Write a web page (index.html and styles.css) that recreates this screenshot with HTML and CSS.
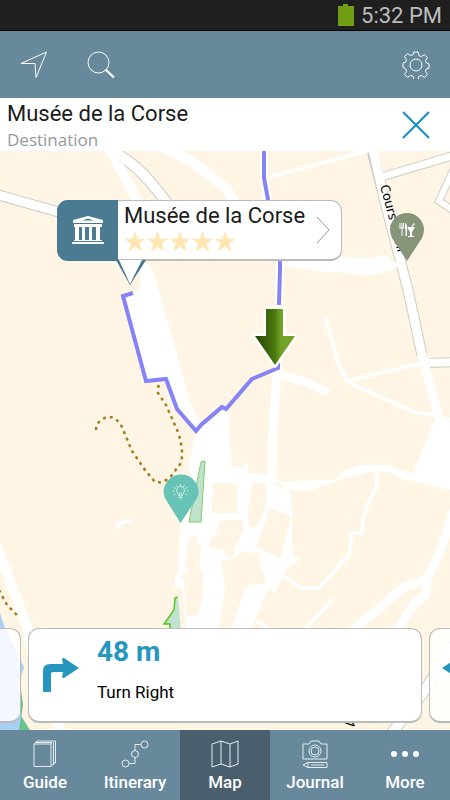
FILE: index.html
```html
<!DOCTYPE html>
<html lang="en">
  <head>
    <meta charset="UTF-8" />
    <meta name="viewport" content="width=device-width,initial-scale=1.0" />
    <title>Map - Musée de la Corse</title>
    <link rel="stylesheet" href="styles.css">
  </head>
  <body>
    <div class="status-bar">
      <svg class="battery" width="16" height="22" viewBox="0 0 16 22"><path d="M0 2h5V0h5v2h6v20H0z" fill="#709f16"/></svg>
      <span>5:32 PM</span>
    </div>

    <header class="toolbar">
      <button type="button" class="icon-button" aria-label="My location">
        <svg width="28" height="28" viewBox="0 0 28 28"><path d="M1 12.500L26.500 1 16 26.500 15 12.500z"/></svg>
      </button>
      <button type="button" class="icon-button" aria-label="Search">
        <svg width="28" height="28" viewBox="0 0 28 28"><circle cx="11.500" cy="11.500" r="10.500"/><path d="M18.500 18.500l8.500 8" stroke-width="2.200"/></svg>
      </button>
      <button type="button" class="icon-button settings" aria-label="Settings">
        <svg width="28" height="28" viewBox="0 0 28 28">
          <path d="M11.800 1h4.400l.7 3.600 2.500 1 3-2 3.100 3.100-2 3 1 2.500 2.500.6v4.400l-2.500.6-1 2.500 2 3-3.100 3.100-3-2-2.500 1-.7 3.100h-4.400l-.7-3.100-2.500-1-3 2-3.100-3.100 2-3-1-2.500L1 16.200v-4.400l2.500-.6 1-2.500-2-3 3.100-3.100 3 2 2.500-1z" stroke-linejoin="round"/>
          <circle cx="14" cy="14" r="6"/>
        </svg>
      </button>
    </header>

    <section class="destination">
      <div>
        <h1>Musée de la Corse</h1>
        <p>Destination</p>
      </div>
      <button type="button" class="icon-button close" aria-label="Close">
        <svg width="28" height="28" viewBox="0 0 28 28"><path d="M1 1l26 26M27 1L1 27"/></svg>
      </button>
    </section>

    <main class="map">
      <svg class="map-canvas" viewBox="0 151 450 579" preserveAspectRatio="xMidYMid slice">
        <rect y="151" width="450" height="579" fill="#fef5e4"/>

        <!-- river and river bank -->
        <path d="M0 613l5 15 19 39-3 10v38l8 15H0z" fill="#a9d0f5"/>
        <path d="M21 716l9 14H19zM21 690l2 15-2 15z" fill="#69c48b"/>

        <!-- roads with an outline -->
        <g class="road-edge">
          <path d="M-5 194L62 213" stroke-width="11"/>
          <path d="M112 151q18 10 30 22t34 42" stroke-width="12"/>
          <path d="M372 151l12 47 24 92 14 65" stroke-width="11"/>
          <path d="M382 177L455 155" stroke-width="9"/>
          <path d="M456 164l-17 37 15 10" stroke-width="8"/>
          <path d="M430 363l25-1" stroke-width="10"/>
          <path d="M388 738l37-48 31-48" stroke-width="12"/>
        </g>
        <g class="road">
          <path d="M-5 194L62 213" stroke-width="9"/>
          <path d="M112 151q18 10 30 22t34 42" stroke-width="10"/>
          <path d="M372 145l12 53 24 92 14 65 20 75" stroke-width="9"/>
          <path d="M378 178L455 155" stroke-width="7"/>
          <path d="M456 164l-17 37 15 10" stroke-width="6"/>
          <path d="M422 363l33-1" stroke-width="8"/>
          <path d="M388 738l37-48 31-48" stroke-width="10"/>
        </g>

        <!-- lanes -->
        <g class="road">
          <path d="M107 145l25 45 15 40" stroke-width="10"/>
          <path d="M158 145l35 17 34 27 25 45" stroke-width="10"/>
          <path d="M269 177l99-26" stroke-width="4"/>
          <path d="M278 366l-3 34-3 40v42" stroke-width="9"/>
          <path d="M278 374l27 8 20 9" stroke-width="9" stroke-linecap="round"/>
          <path d="M326 319l12 44 9 18 67-16h14M347 382l67 30 26 4" stroke-width="4" stroke-linecap="round"/>
          <path d="M376 470l1 16-10 19-4 15-1 13h-11l-1 20-5 6-26 29h-17l-18-11" stroke-width="4"/>
          <path d="M454 510l-14 42-13 27-25 9-22 20-30 24" stroke-width="9"/>
          <path d="M427 578l-1 17-11 8-21 31" stroke-width="9"/>
          <path d="M332 600l-30 32M258 622l20 12" stroke-width="4" stroke-linecap="round"/>
          <path d="M-4 545l16 42 14 36 12 55 26 60" stroke-width="10"/>
          <path d="M119 529l-1-5 13-4" stroke-width="4"/>
        </g>

        <!-- squares and open ground -->
        <g fill="#fff">
          <path d="M140 260l10 5 5 11 8 29 13 45 14 52 10 20-4 10-19-23-12-30-19 1-20-84 14-7z"/>
          <path d="M285 263l15-6 78 1v-3l11 1 2 6h8v4l-8 4-17 5-28-1-1-3-10 2-50-6z"/>
          <path d="M434 421l16-4v73l-37-9-11-2-13-7-13-1-31 7-36 13-7-1-8 1-7-5v-5l46-1 12-9 15-6h28l25 9 5-13z"/>
          <path d="M196 432l29-24 4 4 1 28 2 27h11v-4h5v10l24 1 6 7 16 2-4 7 2 18v31l1 18 9 1-14 10-5 9-9 17-5-6-7 16-10 24H186l-4-40-9-2 2-8 3-4 2-50 9-12 5-25-6-21z"/>
        </g>

        <!-- blocks of houses -->
        <g fill="#fef5e4">
          <path d="M213 483h24v30h-25z"/>
          <path d="M252 483h14v20l-3 12-7 12h-7l-1-14z"/>
          <path d="M220 520h23v11l-7 15-3 11h-8v-7l-15-2v-9l6-5z"/>
          <path d="M270 508l21 8-10 42-25-11z"/>
          <path d="M222 561l12-3 8-6 18 1v15l5 9-1 7-10-1-9 5-14 41h-12l2-12 4-27z"/>
          <path d="M189 537l8-1v9h5l-3 19 4 12-1 24-5 16-11 1-2-39-5-2 10-4v-5h-4z"/>
          <path d="M161 524h18l-4 58-2 3 3 10-12 15zM276 481l14 10-14-6z"/>
        </g>

        <!-- gardens -->
        <path d="M201 462l4-1-4 61h-12z" fill="#bfe3cf" stroke="#7fcb62"/>
        <path d="M181 631l-3-34-3 1-1 12-10 14h6v7z" fill="#bfe3cf"/>
        <path d="M178 597l-3 1-1 12-10 14h6v7" fill="none" stroke="#5cc51f" stroke-width="1.500"/>

        <!-- footpaths -->
        <path class="footpath" d="M96 430q0-9 11-13 9-1 15 10l10 24 13 19 10 12q9 2 17-7l9-12q3-13-3-31l-12-27-8-12 1-14"/>
        <path class="footpath" d="M-1 590l8 15 12 12"/>

        <!-- route -->
        <g fill="none" stroke-linejoin="miter">
          <path d="M264 145v33l5 27 11 55v10l-1 36" stroke="#fff" stroke-width="8"/>
          <path d="M264 145v33l5 27 11 55v10l-1 35M278 361v7l-26 11-26 30-4-2-21 18-5 6-19-22-11-30-20 2-23-85 10-3" stroke="#8583f6" stroke-width="4"/>
        </g>

        <defs>
          <linearGradient id="arrow">
            <stop offset="0" stop-color="#244600"/>
            <stop offset=".5" stop-color="#4c7910"/>
            <stop offset=".65" stop-color="#72a326"/>
            <stop offset="1" stop-color="#72a326"/>
          </linearGradient>
        </defs>
        <path d="M266 309h17v27h12l-20 29-20-29h11z" fill="url(#arrow)" stroke="#fff" stroke-width="5" stroke-linejoin="round" paint-order="stroke"/>

        <text class="street" transform="translate(380 186) rotate(75)">Cours Paoli</text>
        <text class="street" transform="translate(352 729) rotate(-52)">Ve</text>

        <!-- restaurant pin -->
        <g transform="translate(407 261)">
          <path d="M0 0L-15-23Q-17-28-17-31A17 17 0 0 1 17-31Q17-28 15-23z" fill="#86947a"/>
          <path d="M-7-38v5M-5-38v5M-3.500-38v5M-7.500-33h4.500M-5-33v8" stroke="#fff" fill="none"/>
          <path d="M-2-38q2 0 2 5v8h-1.500v-7H-2zM0-34h8l-3 5v4h2v1H1v-1h2v-4zM4-34l3-4 1 1-3 3z" fill="#fff"/>
        </g>

        <!-- sight pin -->
        <g transform="translate(180.500 523)">
          <path d="M0 0L-15-24Q-17-28-17-31A17 17 0 0 1 18-31Q18-28 16-24z" fill="#66c3b5"/>
          <g fill="none" stroke="#dff5ef" stroke-width=".8">
            <path d="M-2-27q0-2-1-3a4 4 0 1 1 6 0q-1 1-1 3zM-2-25.500h4M-1-24h2M-1-27v-3h2v3"/>
            <path d="M0-39v3M-4-38l1 2M4-38l-1 2M-7-36l2 2M7-36l-2 2M-8-32h2M8-32H6M-7-28l2-1M7-28l-2-1"/>
          </g>
        </g>
      </svg>

      <a href="#" class="callout">
        <span class="callout-icon">
          <svg width="32" height="30" viewBox="0 0 32 30" fill="#fff">
            <path fill-rule="evenodd" d="M1 4l15-4 15 4v3H1zM10 4.500h12L16 2.500z"/>
            <path d="M2 8h28v3H2zM3 11h4v13H3zM10 11h3v13h-3zM17 11h3v13h-3zM24 11h4v13h-4zM2 24h28v1H2zM0 26h32v2H0z"/>
          </svg>
        </span>
        <span class="callout-text">
          <span class="callout-title">Musée de la Corse</span>
          <svg class="stars" width="113" height="21" viewBox="0 0 113 21" role="img" aria-label="5 stars">
            <defs><path id="star" d="M11 0l2.600 7.700h8.200l-6.600 4.900 2.500 7.900L11 15.700l-6.700 4.800 2.500-7.900L.2 7.700h8.200z"/></defs>
            <use href="#star"/><use href="#star" x="22.500"/><use href="#star" x="45"/><use href="#star" x="67.500"/><use href="#star" x="90"/>
          </svg>
        </span>
        <svg class="chevron" width="14" height="28" viewBox="0 0 14 28"><path d="M1 1l12 13L1 27"/></svg>
        <svg class="callout-tail" width="32" height="26" viewBox="0 0 32 26"><path d="M1 0h30L15 25z" fill="#457891"/><path d="M4 0h23L15 24z" fill="#fff"/></svg>
      </a>

      <div class="steps">
        <article class="step side"></article>
        <article class="step">
          <svg class="turn" width="36" height="34" viewBox="0 0 36 34"><path d="M0 34V13q0-7 7-7h13l-1-5q0-1 2-1l15 10-15 10q-2 0-2-1l1-5H10q-2 0-2 2v18z"/></svg>
          <div class="step-text">
            <h2>48 m</h2>
            <p>Turn Right</p>
          </div>
        </article>
        <article class="step side">
          <svg class="turn" width="36" height="34" viewBox="0 0 36 34"><path d="M36 34V13q0-7-7-7H16l1-5q0-1-2-1L0 10l15 10q2 0 2-1l-1-5h10q2 0 2 2v18z"/></svg>
        </article>
      </div>
    </main>

    <nav class="tab-bar">
      <a href="#">
        <svg width="28" height="28" viewBox="0 0 28 28"><path d="M3 4h17v22.500H3zM3 4l3-3h18.500v22H23M20 4l1-1.500H5M22.500 2.500V25H20"/></svg>
        <span>Guide</span>
      </a>
      <a href="#">
        <svg width="28" height="28" viewBox="0 0 28 28"><circle cx="4.500" cy="23.500" r="3.500"/><circle cx="14" cy="14" r="3.500"/><circle cx="23.500" cy="4.500" r="3.500"/><path d="M8 23.500h6v-6M14 10.500v-6h6"/></svg>
        <span>Itinerary</span>
      </a>
      <a href="#" class="active">
        <svg width="28" height="28" viewBox="0 0 28 28"><path d="M1 4l9-3 9 3 8-3v23l-8 3-9-3-9 3zM10 1v23M19 4v23"/></svg>
        <span>Map</span>
      </a>
      <a href="#">
        <svg width="28" height="28" viewBox="0 0 28 28"><path d="M2 4h6l2-3h8l2 3h6v15H2z"/><circle cx="14" cy="11" r="6"/><circle cx="14" cy="11" r="4"/><path d="M2 25l5-2.500h19v5H7zM7 22.500v5M10 25h13"/></svg>
        <span>Journal</span>
      </a>
      <a href="#">
        <svg width="28" height="28" viewBox="0 0 28 28"><g fill="#fff" stroke="none"><circle cx="3" cy="14" r="3"/><circle cx="14" cy="14" r="3"/><circle cx="25" cy="14" r="3"/></g></svg>
        <span>More</span>
      </a>
    </nav>
  </body>
</html>
```
FILE: styles.css
```css
* {
  margin: 0;
  padding: 0;
  box-sizing: border-box;
}
body {
  font-family: Roboto, sans-serif;
  color: #1b1b1b;
  min-height: 100vh;
  display: flex;
  flex-direction: column;
}
svg {
  display: block;
}
a {
  color: inherit;
  text-decoration: none;
}
.status-bar {
  display: flex;
  align-items: center;
  justify-content: flex-end;
  gap: 7px;
  height: 31px;
  padding: 0 8px;
  background: #1f1f1f;
  border-bottom: 1px solid #000;
  color: #bdbdbd;
  font-size: 22px;
}
.toolbar {
  display: flex;
  align-items: center;
  gap: 39px;
  height: 67px;
  padding: 0 20px;
  background: #68899b;
}
.icon-button {
  border: none;
  background: none;
  cursor: pointer;
}
.icon-button svg {
  fill: none;
  stroke: #fff;
}
.settings {
  margin-left: auto;
}
.destination {
  display: flex;
  align-items: center;
  justify-content: space-between;
  height: 53px;
  padding: 0 20px 0 7px;
  background: #fff;
}
.destination h1 {
  font-size: 22px;
  font-weight: 400;
  line-height: 30px;
}
.destination p {
  font-family: "Open Sans", sans-serif;
  font-size: 17px;
  line-height: 22px;
  color: #999;
}
.close svg {
  stroke: #118fc0;
  stroke-width: 2;
}
.map {
  flex: 1;
  position: relative;
  overflow: hidden;
  min-height: 400px;
  background: #fef5e4;
}
.map-canvas {
  position: absolute;
  width: 100%;
  height: 100%;
}
.road-edge {
  fill: none;
  stroke: #cfcdc6;
}
.road {
  fill: none;
  stroke: #fff;
}
.footpath {
  fill: none;
  stroke: #a87a1c;
  stroke-width: 2.5;
  stroke-dasharray: 3 4;
}
.street {
  font-family: "Noto Sans", sans-serif;
  font-size: 13px;
  fill: #000;
}
.callout {
  position: absolute;
  top: 49px;
  left: 57px;
  display: flex;
  width: 285px;
  height: 61px;
  background: #fff;
  border: 1px solid #bbb;
  border-bottom-width: 2px;
  border-radius: 11px;
}
.callout-icon {
  display: flex;
  align-items: center;
  justify-content: center;
  width: 61px;
  margin: -1px 0 -2px -1px;
  background: #4b7b93;
  border-radius: 11px 0 0 11px;
}
.callout-text {
  flex: 1;
  padding-left: 6px;
}
.callout-title {
  display: block;
  font-size: 22px;
  line-height: 30px;
  white-space: nowrap;
}
.stars {
  fill: #ffe6b0;
}
.chevron {
  align-self: center;
  margin-right: 11px;
  fill: none;
  stroke: #999;
}
.callout-tail {
  position: absolute;
  top: 59px;
  left: 57px;
}
.steps {
  position: absolute;
  left: 0;
  right: 0;
  bottom: 7px;
  display: flex;
  justify-content: center;
  gap: 7px;
}
.step {
  flex: 0 0 calc(100% - 56px);
  display: flex;
  align-items: center;
  gap: 18px;
  height: 95px;
  padding: 0 14px;
  background: #fff;
  border: 1px solid #bbb;
  border-bottom-width: 2px;
  border-radius: 11px;
}
.step.side {
  padding: 0 12px;
  background: rgba(255, 255, 255, 0.85);
}
.step-text {
  padding-bottom: 10px;
}
.step h2 {
  font-size: 28px;
  line-height: 36px;
  color: #2596be;
}
.step p {
  margin-top: 8px;
  font-size: 17px;
  line-height: 28px;
  color: #000;
}
.turn {
  fill: #2596be;
}
.tab-bar {
  display: flex;
  height: 70px;
  background: #68899b;
}
.tab-bar a {
  flex: 1;
  display: flex;
  flex-direction: column;
  align-items: center;
  padding-top: 10px;
  color: #fff;
  font-size: 17px;
  font-weight: 500;
  line-height: 28px;
}
.tab-bar svg {
  fill: none;
  stroke: #e6edf0;
}
.tab-bar .active {
  background: #4a5f6e;
}
```
